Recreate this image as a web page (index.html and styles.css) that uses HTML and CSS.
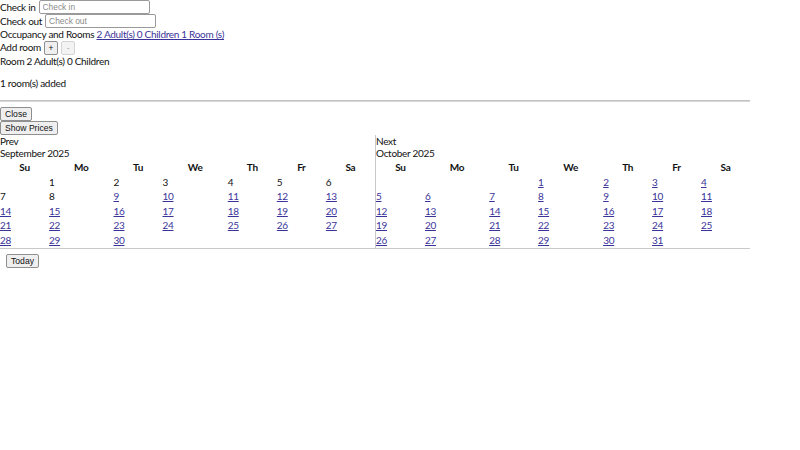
FILE: index.html
```html
<!DOCTYPE html>
<html>
<head>
<meta charset="utf-8">
<link rel="stylesheet" href="styles.css">
</head>
<body>
<div class="booking">
  <div class="row"><label>Check in</label><input class="date-input" placeholder="Check in"></div>
  <div class="row"><label>Check out</label><input class="date-input" placeholder="Check out"></div>
  <div class="line">Occupancy and Rooms <a href="#">2 Adult(s) 0 Children 1 Room (s)</a></div>
  <div class="row"><span>Add room</span><button class="small-btn">+</button><button class="small-btn" disabled>-</button></div>
  <div class="line">Room 2 Adult(s) 0 Children</div>
  <p class="added">1 room(s) added</p>
  <hr class="divider">
  <button class="btn">Close</button>
  <button class="btn">Show Prices</button>
  <div class="calendar">
    <div class="month">
      <div class="line">Prev</div>
      <div class="line">September 2025</div>
      <table class="grid">
        <thead><tr><th>Su</th><th>Mo</th><th>Tu</th><th>We</th><th>Th</th><th>Fr</th><th>Sa</th></tr></thead>
        <tbody>
          <tr><td></td><td>1</td><td>2</td><td>3</td><td>4</td><td>5</td><td>6</td></tr>
          <tr><td>7</td><td>8</td><td><a href="#">9</a></td><td><a href="#">10</a></td><td><a href="#">11</a></td><td><a href="#">12</a></td><td><a href="#">13</a></td></tr>
          <tr><td><a href="#">14</a></td><td><a href="#">15</a></td><td><a href="#">16</a></td><td><a href="#">17</a></td><td><a href="#">18</a></td><td><a href="#">19</a></td><td><a href="#">20</a></td></tr>
          <tr><td><a href="#">21</a></td><td><a href="#">22</a></td><td><a href="#">23</a></td><td><a href="#">24</a></td><td><a href="#">25</a></td><td><a href="#">26</a></td><td><a href="#">27</a></td></tr>
          <tr><td><a href="#">28</a></td><td><a href="#">29</a></td><td><a href="#">30</a></td><td></td><td></td><td></td><td></td></tr>
        </tbody>
      </table>
    </div>
    <div class="month month-right">
      <div class="line">Next</div>
      <div class="line">October 2025</div>
      <table class="grid">
        <thead><tr><th>Su</th><th>Mo</th><th>Tu</th><th>We</th><th>Th</th><th>Fr</th><th>Sa</th></tr></thead>
        <tbody>
          <tr><td></td><td></td><td></td><td><a href="#">1</a></td><td><a href="#">2</a></td><td><a href="#">3</a></td><td><a href="#">4</a></td></tr>
          <tr><td><a href="#">5</a></td><td><a href="#">6</a></td><td><a href="#">7</a></td><td><a href="#">8</a></td><td><a href="#">9</a></td><td><a href="#">10</a></td><td><a href="#">11</a></td></tr>
          <tr><td><a href="#">12</a></td><td><a href="#">13</a></td><td><a href="#">14</a></td><td><a href="#">15</a></td><td><a href="#">16</a></td><td><a href="#">17</a></td><td><a href="#">18</a></td></tr>
          <tr><td><a href="#">19</a></td><td><a href="#">20</a></td><td><a href="#">21</a></td><td><a href="#">22</a></td><td><a href="#">23</a></td><td><a href="#">24</a></td><td><a href="#">25</a></td></tr>
          <tr><td><a href="#">26</a></td><td><a href="#">27</a></td><td><a href="#">28</a></td><td><a href="#">29</a></td><td><a href="#">30</a></td><td><a href="#">31</a></td><td></td></tr>
        </tbody>
      </table>
    </div>
  </div>
  <div class="footer"><button class="btn">Today</button></div>
</div>
</body>
</html>
```

FILE: styles.css
```css
html, body {
  margin: 0;
  padding: 0;
  background: #fff;
}
body {
  font-family: Lato, "Noto Sans", sans-serif;
  font-size: 10px;
  line-height: 12.6px;
  letter-spacing: -0.3px;
  color: #111;
}
a {
  color: #3a3399;
  text-decoration: underline;
}
.booking {
  width: 750px;
}
.row {
  display: flex;
  align-items: center;
  gap: 2px;
  height: 14px;
}
.line {
  height: 12.6px;
  white-space: nowrap;
}
.date-input {
  box-sizing: border-box;
  width: 111px;
  height: 14px;
  margin: 0 0 0 1px;
  padding: 0 3px;
  border: 1px solid #9a9a9a;
  border-radius: 2px;
  font-family: "Liberation Sans", Arial, sans-serif;
  font-size: 8.4px;
  letter-spacing: 0;
  color: #111;
}
.date-input::placeholder {
  color: #8a8a8a;
}
.small-btn {
  box-sizing: border-box;
  width: 14px;
  height: 14px;
  padding: 0;
  margin-left: 1px;
  border: 1px solid #8f8f8f;
  border-radius: 2px;
  background: #efefef;
  font-family: "Liberation Sans", Arial, sans-serif;
  font-size: 8.4px;
  letter-spacing: 0;
  color: #111;
}
.small-btn:disabled {
  border-color: #d4d4d4;
  background: #f3f3f3;
  color: #aaa;
}
.added {
  margin: 10px 0;
}
.divider {
  margin: 10px 0 5px;
  height: 0;
  border: 0;
  border-top: 1px solid #c2c2c2;
  border-bottom: 1px solid #d6d6d6;
}
.btn {
  display: block;
  box-sizing: border-box;
  height: 14px;
  padding: 0 4px;
  margin: 0;
  border: 1px solid #8f8f8f;
  border-radius: 2px;
  background: #efefef;
  font-family: "Liberation Sans", Arial, sans-serif;
  font-size: 8.6px;
  letter-spacing: 0;
  line-height: 12px;
  color: #111;
}
.calendar {
  display: grid;
  grid-template-columns: 375px 375px;
  border-bottom: 1px solid #c8c8c8;
}
.month-right {
  border-left: 1px solid #c8c8c8;
}
.grid {
  width: 100%;
  border-collapse: collapse;
  border-spacing: 0;
}
.grid th {
  padding: 1px 0;
  font-weight: bold;
  text-align: center;
  line-height: 12.6px;
}
.grid td {
  padding: 1px 0;
  text-align: left;
  line-height: 12.6px;
}
.footer {
  padding: 5px 6px;
}
.footer .btn {
  width: 33px;
  padding: 0;
}
```
